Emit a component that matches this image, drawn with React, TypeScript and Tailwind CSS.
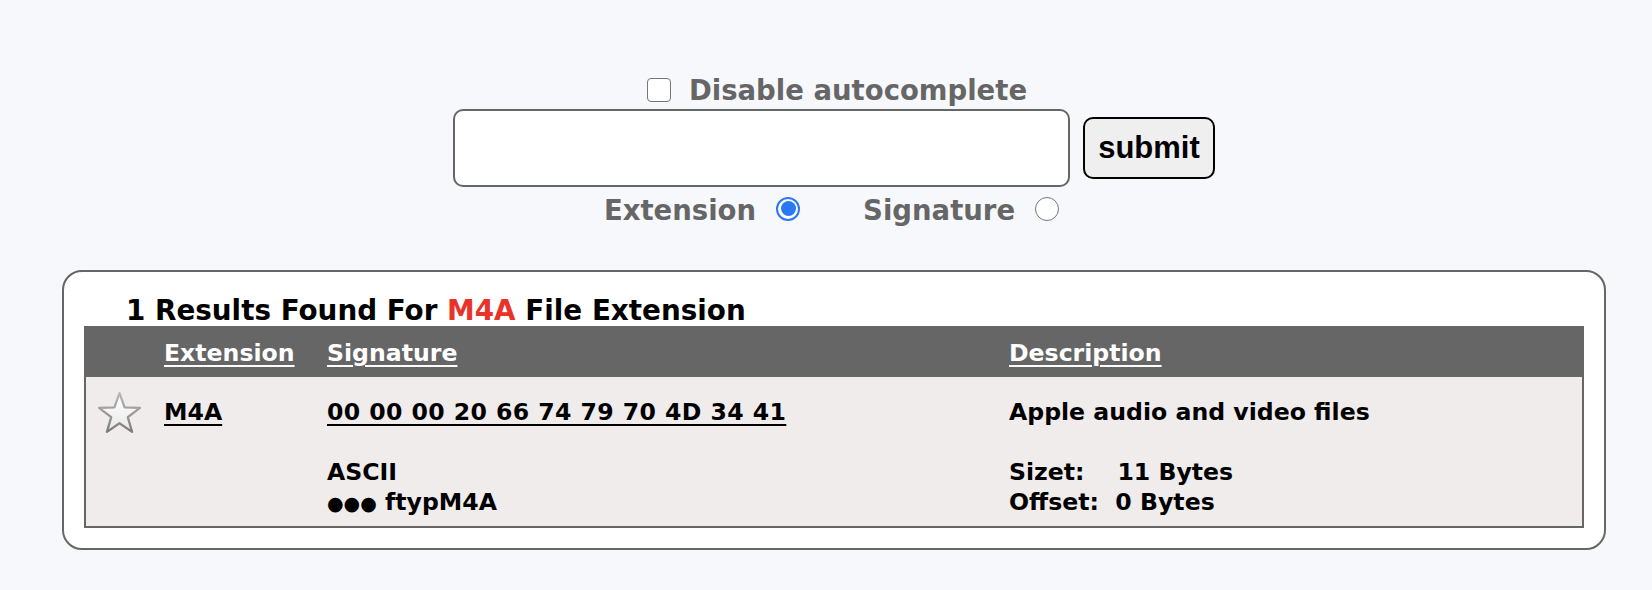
import React from 'react';

// search page: form on top, results card below
const font = "font-['DejaVu_Sans',Verdana,sans-serif] font-bold";

function Star() {
  return (
    <svg width="45" height="45" viewBox="0 0 44 44">
      <defs>
        <linearGradient id="starStroke" x1="0" y1="0" x2="0" y2="1">
          <stop offset="0" stopColor="#b8b8b8" />
          <stop offset="1" stopColor="#7c7c7c" />
        </linearGradient>
        <linearGradient id="starFill" x1="0" y1="0" x2="0" y2="1">
          <stop offset="0" stopColor="#ffffff" />
          <stop offset="1" stopColor="#e8e8e8" />
        </linearGradient>
      </defs>
      <polygon
        points="22,2 27,16.1 42,16.5 30.1,25.6 34.3,40 22,31.5 9.7,40 13.9,25.6 2,16.5 17,16.1"
        fill="url(#starFill)"
        stroke="url(#starStroke)"
        strokeWidth="2.2"
        strokeLinejoin="round"
      />
    </svg>
  );
}

function Radio({ checked }: { checked?: boolean }) {
  if (checked) {
    return (
      <span className="w-[24px] h-[24px] rounded-full border-2 border-[#2a78f5] bg-white flex items-center justify-center">
        <span className="w-[15px] h-[15px] rounded-full bg-[#2a78f5]" />
      </span>
    );
  }
  return <span className="block w-[24px] h-[24px] rounded-full border-[1.5px] border-[#767676] bg-white" />;
}

export default function App() {
  return (
    <div className={`min-h-screen bg-[#f7f8fc] pt-[74px] ${font}`}>
      {/* search form */}
      <div className="flex justify-center items-center h-[32px] pl-[22px] text-[27.5px] text-[#666]">
        <span className="w-[24px] h-[24px] border-[1.5px] border-[#767676] rounded-[4px] bg-white mr-[18px]" />
        <span className="leading-[32px]">Disable autocomplete</span>
      </div>
      <div className="flex justify-center items-center mt-[3px] h-[78px] pl-[16px]">
        <div className="w-[617px] h-[78px] border-2 border-[#666] rounded-[10px] bg-white" />
        <button className="ml-[13px] w-[132px] h-[62px] border-2 border-black rounded-[10px] bg-[#efefef] text-black text-[31px] font-['Liberation_Sans',Arial,sans-serif] font-bold">
          submit
        </button>
      </div>
      <div className="flex justify-center items-center mt-[7px] h-[32px] pl-[11px] text-[27.5px] text-[#666]">
        <span className="leading-[32px]">Extension</span>
        <span className="ml-[20px] -mt-[3px]">
          <Radio checked />
        </span>
        <span className="ml-[63px] leading-[32px]">Signature</span>
        <span className="ml-[20px] -mt-[3px]">
          <Radio />
        </span>
      </div>

      {/* results card */}
      <div className="mt-[44px] ml-[62px] w-[1544px] border-2 border-[#666] rounded-[20px] bg-white px-[20px] pt-[23px] pb-[20px]">
        <div className="ml-[42px] text-[27.8px] leading-[31px] text-black">
          1 Results Found For <span className="text-[#e8332a]">M4A</span> File Extension
        </div>
        <div className="border-2 border-[#666] text-[23.6px] leading-[30px]">
          <div className="grid grid-cols-[78px_163px_682px_1fr] bg-[#666] text-white pt-[10px] pb-[9px]">
            <div />
            <div><span className="underline decoration-2 underline-offset-[4px]">Extension</span></div>
            <div><span className="underline decoration-2 underline-offset-[4px]">Signature</span></div>
            <div><span className="underline decoration-2 underline-offset-[4px]">Description</span></div>
          </div>
          <div className="grid grid-cols-[78px_163px_682px_1fr] bg-[#f0ecec] text-black">
            <div className="pl-[11px] pt-[14px]">
              <Star />
            </div>
            <div className="pt-[20px]">
              <span className="underline decoration-2 underline-offset-[4px]">M4A</span>
            </div>
            <div className="pt-[20px] pb-[8px]">
              <div>
                <span className="underline decoration-2 underline-offset-[4px] tracking-[0.4px]">00 00 00 20 66 74 79 70 4D 34 41</span>
              </div>
              <div className="h-[30px]" />
              <div>ASCII</div>
              <div>
                <span className="text-[19px]">●●●</span> ftypM4A
              </div>
            </div>
            <div className="pt-[20px] pb-[8px]">
              <div>Apple audio and video files</div>
              <div className="h-[30px]" />
              <div className="whitespace-pre">Sizet:    11 Bytes</div>
              <div className="whitespace-pre">Offset:  0 Bytes</div>
            </div>
          </div>
        </div>
      </div>
    </div>
  );
}
